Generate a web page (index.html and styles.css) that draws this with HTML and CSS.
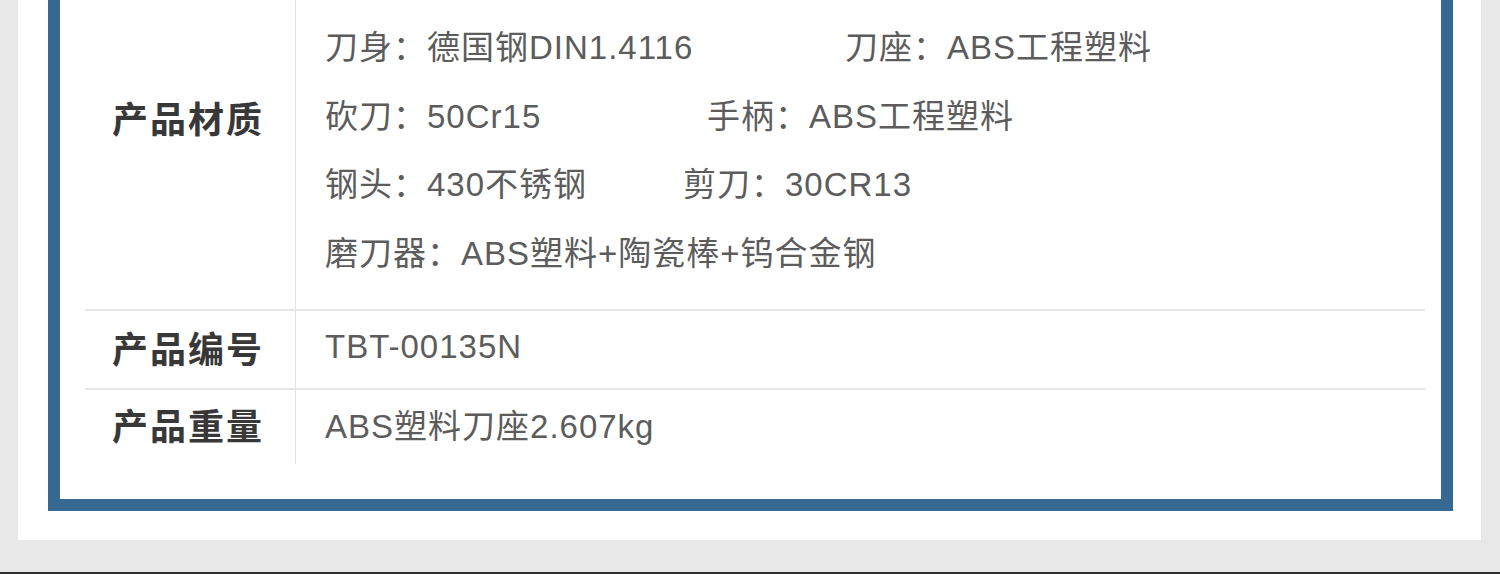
FILE: index.html
```html
<!DOCTYPE html>
<html lang="zh-CN">
<head>
<meta charset="utf-8">
<title>产品参数</title>
<link rel="stylesheet" href="styles.css">
</head>
<body>
<div class="panel">
  <div class="frame">
    <div class="spec-table">
      <div class="row row-material">
        <div class="label label-top">产品材质</div>
        <div class="value">
          <div class="line"><span class="item w520">刀身：德国钢DIN1.4116</span><span class="item">刀座：ABS工程塑料</span></div>
          <div class="line"><span class="item w382">砍刀：50Cr15</span><span class="item">手柄：ABS工程塑料</span></div>
          <div class="line"><span class="item w358">钢头：430不锈钢</span><span class="item">剪刀：30CR13</span></div>
          <div class="line"><span class="item">磨刀器：ABS塑料+陶瓷棒+钨合金钢</span></div>
        </div>
      </div>
      <div class="row row-code">
        <div class="label label-mid">产品编号</div>
        <div class="value value-single">TBT-00135N</div>
      </div>
      <div class="row row-weight">
        <div class="label label-mid">产品重量</div>
        <div class="value value-single">ABS塑料刀座2.607kg</div>
      </div>
    </div>
  </div>
</div>
<div class="gap"></div>
<div class="bottom-line"></div>
</body>
</html>
```
FILE: styles.css
```css
html, body {
  margin: 0;
  padding: 0;
}
body {
  width: 1500px;
  height: 574px;
  overflow: hidden;
  background: #e8e8e8;
  font-family: "Liberation Sans", "Noto Sans CJK SC", sans-serif;
  display: flex;
  flex-direction: column;
}
.panel {
  margin-left: 18px;
  width: 1463px;
  height: 540px;
  background: #ffffff;
  padding: 0 28px 29px 30px;
  box-sizing: border-box;
  flex: none;
}
.frame {
  height: 100%;
  box-sizing: border-box;
  border: 12px solid #356992;
  border-top: none;
  padding: 0 16px 0 25px;
}
.spec-table {
  display: flex;
  flex-direction: column;
}
.row {
  display: flex;
  border-bottom: 2px solid #e6e6e6;
}
.row-weight {
  border-bottom: none;
}
.row-material { height: 309px; }
.row-code { height: 77px; align-items: center; }
.row-weight { height: 74px; align-items: center; }
.label {
  width: 211px;
  flex: none;
  align-self: stretch;
  display: flex;
  align-items: center;
  justify-content: center;
  padding-right: 4px;
  box-sizing: border-box;
  border-right: 1px solid #e3e3e3;
  font-family: "Noto Sans CJK SC", sans-serif;
  font-weight: 700;
  font-size: 36px;
  letter-spacing: 2px;
  color: #383838;
}
.label-top {
  align-items: flex-start;
  padding-top: 92px;
  line-height: 50px;
}
.label-mid {
  padding-bottom: 6px;
}
.value {
  padding-left: 29px;
  font-size: 33px;
  color: #5c5c5c;
  letter-spacing: 1px;
}
.row-material .value {
  padding-top: 14px;
}
.line {
  display: flex;
  height: 68.5px;
  line-height: 68.5px;
  white-space: nowrap;
}
.item { flex: none; }
.w520 { width: 520px; }
.w382 { width: 382px; }
.w358 { width: 358px; }
.value-single {
  white-space: nowrap;
  padding-bottom: 6px;
}
.gap {
  height: 32px;
  flex: none;
}
.bottom-line {
  height: 2px;
  background: #2e2e2e;
  flex: none;
}
```
